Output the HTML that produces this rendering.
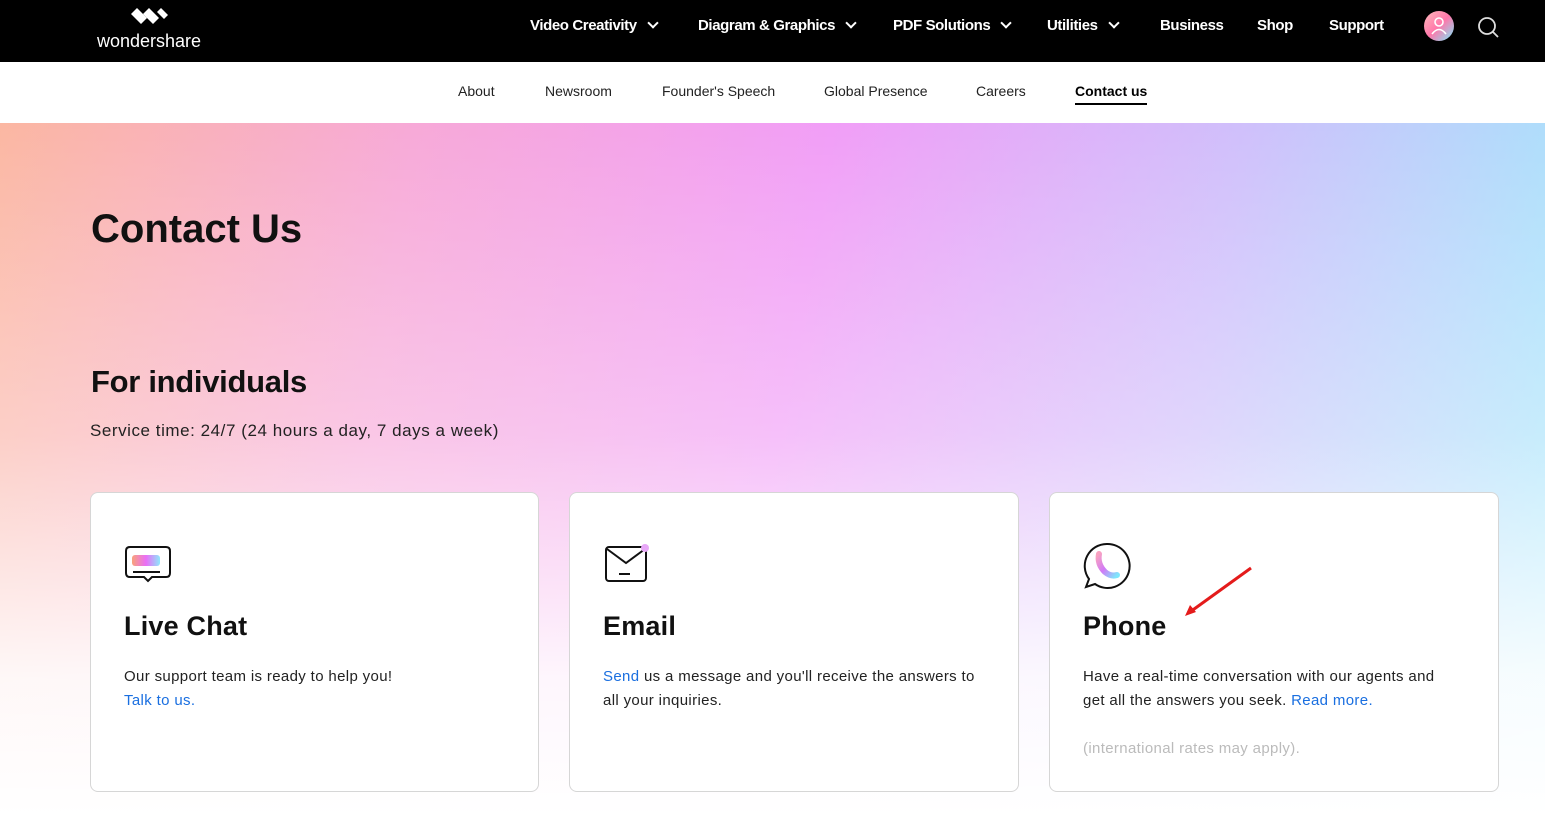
<!DOCTYPE html>
<html><head><meta charset="utf-8"><style>
*{margin:0;padding:0;box-sizing:border-box}
body{width:1545px;height:816px;overflow:hidden;font-family:"Liberation Sans",sans-serif;background:#fff;position:relative}
.top{position:absolute;left:0;top:0;width:1545px;height:62px;background:#000;color:#fff}
.logo{position:absolute;left:97px;top:6px}
.logo span{position:absolute;top:25px;left:0;font-size:18px;letter-spacing:0px;white-space:nowrap}
.nav{position:absolute;top:17px;font-size:15px;font-weight:bold;white-space:nowrap;letter-spacing:-0.4px}
.chev{display:inline-block;width:8px;height:8px;border-right:2px solid #fff;border-bottom:2px solid #fff;transform:rotate(45deg);margin-left:12px;position:relative;top:-3px}
.sub{position:absolute;top:62px;left:0;width:1545px;height:61px;background:#fff}
.sub a{position:absolute;top:21px;font-size:14px;color:#222;text-decoration:none}
.hero{position:absolute;top:123px;left:0;width:1545px;height:693px;
background:
linear-gradient(to bottom,rgba(255,255,255,0) 0%,rgba(255,255,255,0.35) 45%,rgba(255,255,255,0.9) 80%,#fff 100%),
linear-gradient(100deg,#fbb7a2 0%,#f7a9d8 25%,#f19ef7 50%,#cfc0fb 75%,#a2e9fb 100%);}
h1{position:absolute;left:91px;top:207px;font-size:40px;font-weight:bold;color:#111;letter-spacing:0px}
h2{position:absolute;left:91px;top:364px;font-size:31px;font-weight:bold;color:#111;letter-spacing:-0.3px}
.st{position:absolute;left:90px;top:421px;font-size:17px;color:#222;letter-spacing:0.55px}
.card{position:absolute;top:492px;height:300px;background:#fff;border:1px solid #d6d6d6;border-radius:8px}
.card h3{position:absolute;left:33px;top:118px;font-size:27px;font-weight:bold;color:#111;letter-spacing:0.2px}
.card p{position:absolute;left:33px;top:172px;font-size:15px;line-height:24px;color:#222;letter-spacing:0.35px;white-space:nowrap}
.card a{color:#1a6fe0;text-decoration:none}
.ic{position:absolute;left:33px;top:50px}
</style></head><body>
<div class="top">
 <div class="logo">
  <svg width="106" height="22" viewBox="0 0 106 22" style="position:absolute;left:32px;top:0"><g fill="#fff"><path d="M2 8 L8 2 L18 12 L12 18Z"/><path d="M14 8 L20 2 L30 12 L24 18Z"/><path d="M28 6 L32 2 L39 9 L35 13Z"/></g></svg>
  <span>wondershare</span>
 </div>
 <div class="nav" style="left:530px">Video Creativity<i class="chev"></i></div>
 <div class="nav" style="left:698px">Diagram &amp; Graphics<i class="chev"></i></div>
 <div class="nav" style="left:893px">PDF Solutions<i class="chev"></i></div>
 <div class="nav" style="left:1047px">Utilities<i class="chev"></i></div>
 <div class="nav" style="left:1160px">Business</div>
 <div class="nav" style="left:1257px">Shop</div>
 <div class="nav" style="left:1329px">Support</div>
 <div style="position:absolute;left:1424px;top:11px;width:30px;height:30px;border-radius:50%;background:linear-gradient(135deg,#fbb 0%,#f7a 50%,#7ef 100%)"><svg width="30" height="30"><circle cx="15" cy="11" r="4" fill="none" stroke="#fff" stroke-width="1.6"/><path d="M8 23 Q15 14 22 23" fill="none" stroke="#fff" stroke-width="1.6"/></svg></div>
 <svg style="position:absolute;left:1477px;top:16px" width="24" height="24"><circle cx="10" cy="10" r="8" fill="none" stroke="#ddd" stroke-width="1.8"/><path d="M16 16 L21 21" stroke="#ddd" stroke-width="1.8"/></svg>
</div>
<div class="sub">
 <a style="left:458px">About</a><a style="left:545px">Newsroom</a><a style="left:662px">Founder's Speech</a><a style="left:824px">Global Presence</a><a style="left:976px">Careers</a>
 <a style="left:1075px;font-weight:bold;color:#000;border-bottom:2px solid #000;padding-bottom:4px">Contact us</a>
</div>
<div class="hero"></div>
<h1>Contact Us</h1>
<h2>For individuals</h2>
<div class="st">Service time: 24/7 (24 hours a day, 7 days a week)</div>
<div class="card" style="left:90px;width:449px">
 <svg class="ic" width="48" height="42" viewBox="0 0 48 42" style="left:33px;top:52px"><defs><linearGradient id="g1" x1="0" x2="1"><stop offset="0" stop-color="#f9a27a"/><stop offset=".5" stop-color="#e96ef7"/><stop offset="1" stop-color="#8ee8fb"/></linearGradient></defs><path d="M6 2 H42 Q46 2 46 6 V28 Q46 32 42 32 H28 L24 36 L20 32 H6 Q2 32 2 28 V6 Q2 2 6 2Z" fill="#fff" stroke="#111" stroke-width="2"/><rect x="8" y="10" width="28" height="11" rx="3" fill="url(#g1)"/><path d="M9 27 H36" stroke="#111" stroke-width="2"/></svg>
 <h3>Live Chat</h3>
 <p>Our support team is ready to help you!<br><a>Talk to us.</a></p>
</div>
<div class="card" style="left:569px;width:450px">
 <svg class="ic" width="50" height="44" viewBox="0 0 50 44" style="left:34px;top:50px"><rect x="2" y="4" width="40" height="34" rx="3" fill="#fff" stroke="#111" stroke-width="2"/><path d="M3 6 L22 20 L41 6" fill="none" stroke="#111" stroke-width="2"/><path d="M15 31 H26" stroke="#111" stroke-width="2"/><circle cx="41" cy="5" r="4" fill="#e8a8f8"/></svg>
 <h3>Email</h3>
 <p><a>Send</a> us a message and you'll receive the answers to<br>all your inquiries.</p>
</div>
<div class="card" style="left:1049px;width:450px">
 <svg class="ic" width="48" height="48" viewBox="0 0 48 48" style="left:33px;top:49px"><defs><linearGradient id="g2" x1="0" y1="0" x2="1" y2="1"><stop offset="0" stop-color="#f9a2c0"/><stop offset=".5" stop-color="#d07af7"/><stop offset="1" stop-color="#7ee6fb"/></linearGradient></defs><path d="M24 2 A22 22 0 1 1 12 42 L3 45 L6 37 A22 22 0 0 1 24 2Z" fill="#fff" stroke="#111" stroke-width="2"/><path d="M16 12 Q14 22 22 30 Q28 35 34 33" fill="none" stroke="url(#g2)" stroke-width="6" stroke-linecap="round"/></svg>
 <h3>Phone</h3>
 <p>Have a real-time conversation with our agents and<br>get all the answers you seek. <a>Read more.</a></p>
 <p style="top:244px;color:#bbb">(international rates may apply).</p>
</div>
<svg style="position:absolute;left:1180px;top:562px" width="80" height="60"><path d="M71 6 L10 50" stroke="#e41b1b" stroke-width="3"/><path d="M5 54 L10 43 L16 50Z" fill="#e41b1b"/></svg>
</body></html>
